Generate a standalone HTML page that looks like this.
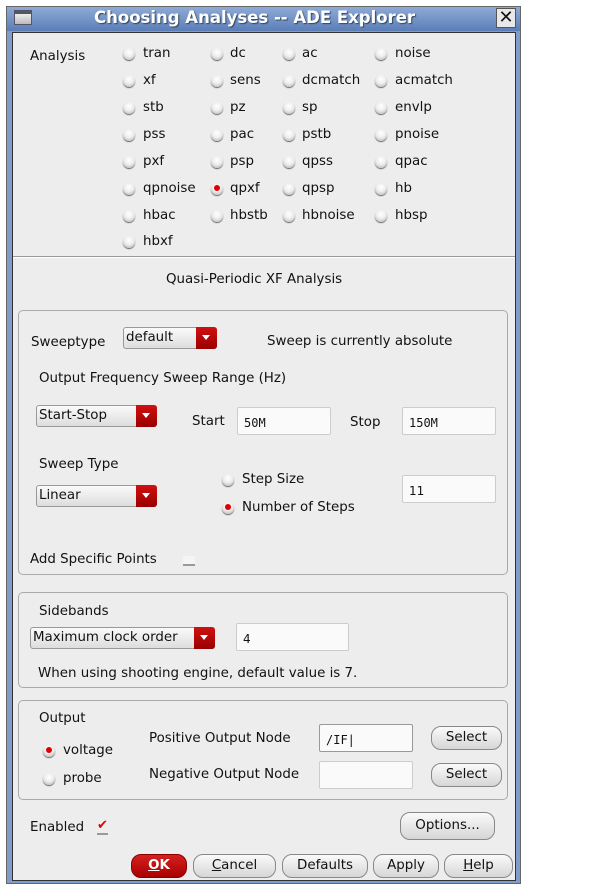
<!DOCTYPE html>
<html><head><meta charset="utf-8"><style>
*{box-sizing:border-box}
body{margin:0;width:601px;height:885px;background:#fff;position:relative;overflow:hidden;font-family:"DejaVu Sans","Liberation Sans",sans-serif;font-size:13.4px;color:#111}
.a{position:absolute;white-space:nowrap;line-height:16px}
.win{position:absolute;left:6px;top:6px;width:515px;height:878px;background:#7f9ccb;border:1px solid #666}
.content{position:absolute;left:12px;top:32px;width:504px;height:849px;background:#ededed;border:1px solid #333}
.title{position:absolute;left:7px;top:7px;width:513px;height:24px;background:linear-gradient(#8eaad6,#5b7eb8)}
.r{position:absolute;width:12px;height:12px;border-radius:50%;background:radial-gradient(circle at 50% 35%,#fff 0,#eee 45%,#aaa 100%);box-shadow:0 1px 1px #666}
.r.on::after{content:"";position:absolute;left:3px;top:2px;width:6px;height:6px;border-radius:50%;background:#d00}
.grp{position:absolute;border:1px solid #aaa;border-radius:5px}
.dd{position:absolute;height:22px;border:1px solid #999;border-radius:3px;background:linear-gradient(#fafafa,#ddd);padding-left:2px;line-height:20px}
.dd b{position:absolute;right:-1px;top:-1px;width:21px;height:22px;background:linear-gradient(#d01010,#900);border-radius:0 3px 3px 0}
.dd b::after{content:"";position:absolute;left:6px;top:8px;border-left:4px solid transparent;border-right:4px solid transparent;border-top:5px solid #fff}
.in{position:absolute;height:28px;background:#fafafa;border:1px solid #ccc;border-radius:2px;font-family:"DejaVu Sans Mono","Liberation Mono",monospace;font-size:12px;padding:8px 0 0 6px;line-height:14px}
.btn{position:absolute;height:24px;border:1px solid #888;border-radius:10px;background:linear-gradient(#fafafa,#d6d6d6);text-align:center;line-height:22px}
</style></head><body>
<div class="win"></div>
<div class="title"></div>
<div class="a" style="left:14px;top:10px;width:18px;height:15px;background:linear-gradient(#eee,#bbb);border:1px solid #556;border-top:4px solid #556"></div>
<div class="a" style="left:94px;top:9px;color:#fff;font-weight:bold;font-size:16.5px;line-height:18px;text-shadow:1px 1px 1px #345">Choosing Analyses -- ADE Explorer</div>
<div class="a" style="left:496px;top:8px;width:20px;height:20px;background:#e8e8e8;border:1px solid #555;font-size:18px;line-height:18px;text-align:center;font-weight:bold">✕</div>
<div class="content"></div>

<div class="a" style="left:30px;top:49px">Analysis</div>
<div class="r" style="left:123px;top:48px"></div><div class="a" style="left:143px;top:46px">tran</div>
<div class="r" style="left:211px;top:48px"></div><div class="a" style="left:230px;top:46px">dc</div>
<div class="r" style="left:283px;top:48px"></div><div class="a" style="left:302px;top:46px">ac</div>
<div class="r" style="left:375px;top:48px"></div><div class="a" style="left:395px;top:46px">noise</div>

<div class="r" style="left:123px;top:75px"></div><div class="a" style="left:143px;top:73px">xf</div>
<div class="r" style="left:211px;top:75px"></div><div class="a" style="left:230px;top:73px">sens</div>
<div class="r" style="left:283px;top:75px"></div><div class="a" style="left:302px;top:73px">dcmatch</div>
<div class="r" style="left:375px;top:75px"></div><div class="a" style="left:395px;top:73px">acmatch</div>

<div class="r" style="left:123px;top:102px"></div><div class="a" style="left:143px;top:100px">stb</div>
<div class="r" style="left:211px;top:102px"></div><div class="a" style="left:230px;top:100px">pz</div>
<div class="r" style="left:283px;top:102px"></div><div class="a" style="left:302px;top:100px">sp</div>
<div class="r" style="left:375px;top:102px"></div><div class="a" style="left:395px;top:100px">envlp</div>

<div class="r" style="left:123px;top:129px"></div><div class="a" style="left:143px;top:127px">pss</div>
<div class="r" style="left:211px;top:129px"></div><div class="a" style="left:230px;top:127px">pac</div>
<div class="r" style="left:283px;top:129px"></div><div class="a" style="left:302px;top:127px">pstb</div>
<div class="r" style="left:375px;top:129px"></div><div class="a" style="left:395px;top:127px">pnoise</div>

<div class="r" style="left:123px;top:156px"></div><div class="a" style="left:143px;top:154px">pxf</div>
<div class="r" style="left:211px;top:156px"></div><div class="a" style="left:230px;top:154px">psp</div>
<div class="r" style="left:283px;top:156px"></div><div class="a" style="left:302px;top:154px">qpss</div>
<div class="r" style="left:375px;top:156px"></div><div class="a" style="left:395px;top:154px">qpac</div>

<div class="r" style="left:123px;top:183px"></div><div class="a" style="left:143px;top:181px">qpnoise</div>
<div class="r on" style="left:211px;top:183px"></div><div class="a" style="left:230px;top:181px">qpxf</div>
<div class="r" style="left:283px;top:183px"></div><div class="a" style="left:302px;top:181px">qpsp</div>
<div class="r" style="left:375px;top:183px"></div><div class="a" style="left:395px;top:181px">hb</div>

<div class="r" style="left:123px;top:210px"></div><div class="a" style="left:143px;top:208px">hbac</div>
<div class="r" style="left:211px;top:210px"></div><div class="a" style="left:230px;top:208px">hbstb</div>
<div class="r" style="left:283px;top:210px"></div><div class="a" style="left:302px;top:208px">hbnoise</div>
<div class="r" style="left:375px;top:210px"></div><div class="a" style="left:395px;top:208px">hbsp</div>

<div class="r" style="left:123px;top:236px"></div><div class="a" style="left:143px;top:234px">hbxf</div>

<div class="a" style="left:13px;top:256px;width:502px;height:2px;border-top:1px solid #999;border-bottom:1px solid #fff"></div>
<div class="a" style="left:166px;top:272px">Quasi-Periodic XF Analysis</div>

<div class="grp" style="left:18px;top:310px;width:490px;height:265px"></div>
<div class="a" style="left:31px;top:335px">Sweeptype</div>
<div class="dd" style="left:123px;top:327px;width:94px">default<b></b></div>
<div class="a" style="left:267px;top:334px">Sweep is currently absolute</div>
<div class="a" style="left:39px;top:371px">Output Frequency Sweep Range (Hz)</div>
<div class="dd" style="left:36px;top:405px;width:121px">Start-Stop<b></b></div>
<div class="a" style="left:192px;top:414px">Start</div>
<div class="in" style="left:237px;top:407px;width:94px">50M</div>
<div class="a" style="left:350px;top:415px">Stop</div>
<div class="in" style="left:402px;top:407px;width:94px">150M</div>
<div class="a" style="left:39px;top:457px">Sweep Type</div>
<div class="dd" style="left:36px;top:485px;width:121px">Linear<b></b></div>
<div class="r" style="left:222px;top:474px"></div><div class="a" style="left:242px;top:472px">Step Size</div>
<div class="r on" style="left:222px;top:502px"></div><div class="a" style="left:242px;top:500px">Number of Steps</div>
<div class="in" style="left:402px;top:475px;width:94px;font-family:'DejaVu Sans',sans-serif">11</div>
<div class="a" style="left:30px;top:552px">Add Specific Points</div>
<div class="a" style="left:183px;top:556px;width:12px;height:10px;border-bottom:2px solid #999;background:#f4f4f4"></div>

<div class="grp" style="left:18px;top:592px;width:490px;height:96px"></div>
<div class="a" style="left:39px;top:604px">Sidebands</div>
<div class="dd" style="left:30px;top:627px;width:185px">Maximum clock order<b></b></div>
<div class="in" style="left:236px;top:623px;width:113px;font-family:'DejaVu Sans',sans-serif">4</div>
<div class="a" style="left:38px;top:666px">When using shooting engine, default value is 7.</div>

<div class="grp" style="left:18px;top:700px;width:490px;height:100px"></div>
<div class="a" style="left:39px;top:711px">Output</div>
<div class="r on" style="left:43px;top:745px"></div><div class="a" style="left:63px;top:743px">voltage</div>
<div class="r" style="left:43px;top:773px"></div><div class="a" style="left:63px;top:771px">probe</div>
<div class="a" style="left:149px;top:731px">Positive Output Node</div>
<div class="a" style="left:149px;top:767px">Negative Output Node</div>
<div class="in" style="left:319px;top:724px;width:94px;border-color:#999">/IF|</div>
<div class="in" style="left:319px;top:761px;width:94px"></div>
<div class="btn" style="left:431px;top:726px;width:71px">Select</div>
<div class="btn" style="left:431px;top:763px;width:71px">Select</div>

<div class="a" style="left:30px;top:820px">Enabled</div>
<div class="a" style="left:97px;top:819px;color:#d00;font-size:13px;border-bottom:2px solid #999;line-height:14px">✔</div>
<div class="btn" style="left:400px;top:812px;width:95px;height:28px;line-height:26px">Options...</div>

<div class="btn" style="left:131px;top:854px;width:56px;background:linear-gradient(#d42020,#a00);color:#fff;font-weight:bold;border-color:#800"><u>O</u>K</div>
<div class="btn" style="left:193px;top:854px;width:83px"><u>C</u>ancel</div>
<div class="btn" style="left:282px;top:854px;width:86px">Defaults</div>
<div class="btn" style="left:373px;top:854px;width:66px">Apply</div>
<div class="btn" style="left:444px;top:854px;width:69px"><u>H</u>elp</div>
</body></html>
